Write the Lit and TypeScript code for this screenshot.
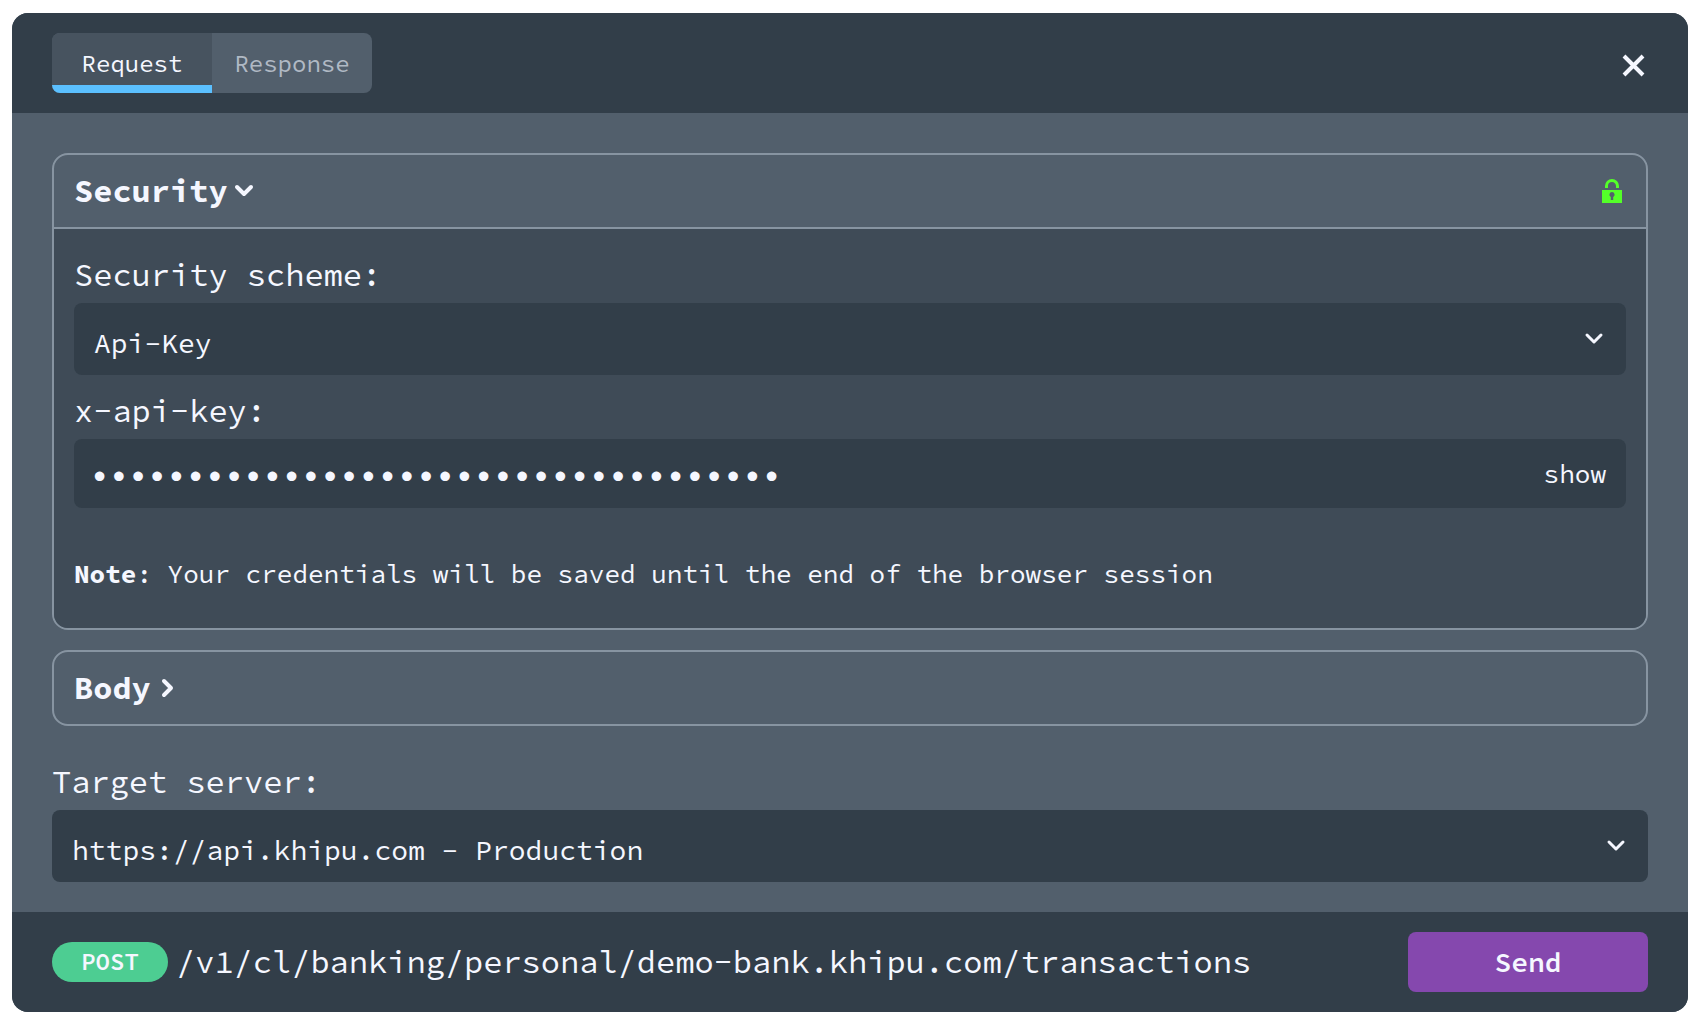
import { LitElement, html, css, svg, nothing } from "lit";
import { customElement, state } from "lit/decorators.js";
import { classMap } from "lit/directives/class-map.js";

const chevron = svg`<path d="M3 6 L10 13 L17 6"/>`;
const chevronRight = svg`<path d="M7 3 L14 10 L7 17"/>`;

@customElement("app-root")
export class AppRoot extends LitElement {
  static styles = css`
    :host {
      --mono: "Source Code Pro", "Noto Sans Mono CJK SC", "Liberation Mono", monospace;
      --text-s: 24px;
      --text-m: 26px;
      --text-l: 28px;
      --text-xl: 32px;
      --dark: #323e49;
      --mid: #525f6c;
      --inset: #3f4b57;
      --line: #8794a1;
      --fg: #f5f7ff;
      display: flex;
      box-sizing: border-box;
      min-height: 100vh;
      padding: 13px 12px 12px;
      background: #fff;
      color: var(--fg);
      font-family: var(--mono);
    }
    *, *::before, *::after { box-sizing: border-box; }
    button, input, select {
      margin: 0;
      border: 0;
      padding: 0;
      background: none;
      color: inherit;
      font: inherit;
    }
    button { cursor: pointer; }
    svg { display: block; flex: none; }
    .dialog {
      display: flex;
      flex: 1;
      flex-direction: column;
      min-width: 0;
      overflow: hidden;
      border-radius: 16px;
      background: var(--mid);
    }
    .bar {
      display: flex;
      align-items: center;
      justify-content: space-between;
      padding: 20px 40px;
      background: var(--dark);
    }
    .tabs {
      display: grid;
      grid-template-columns: 1fr 1fr;
      width: 320px;
      overflow: hidden;
      border-radius: 8px;
      background: var(--mid);
    }
    .tab {
      height: 60px;
      border-bottom: 8px solid transparent;
      padding-top: 10px;
      color: #b0b9c4;
      font-size: var(--text-s);
      line-height: 42px;
    }
    .tab.active {
      border-bottom-color: #5bc0ff;
      background-color: #47535f;
      color: var(--fg);
    }
    .close { padding: 6px 2px 0 4px; }
    .content {
      display: flex;
      flex: 1;
      flex-direction: column;
      gap: 20px;
      padding: 40px 40px 30px;
    }
    .panel {
      overflow: hidden;
      border: 2px solid var(--line);
      border-radius: 16px;
    }
    .summary {
      display: flex;
      align-items: center;
      justify-content: space-between;
      width: 100%;
      height: 72px;
      padding: 0 20px;
      font-size: var(--text-xl);
      font-weight: 700;
      line-height: 44px;
    }
    .title { display: flex; align-items: center; gap: 6px; }
    .chevron {
      fill: none;
      stroke: currentColor;
      stroke-width: 3;
      stroke-linecap: round;
      stroke-linejoin: round;
    }
    .title .chevron { stroke-width: 4; }
    .details {
      border-top: 2px solid var(--line);
      padding: 30px 20px 36px;
      background: var(--inset);
    }
    .field { display: flex; flex-direction: column; }
    .field + .field { margin-top: 20px; }
    .server { margin-top: 20px; }
    .label {
      height: 44px;
      font-size: var(--text-xl);
      line-height: 32px;
    }
    .control {
      display: grid;
      grid-template-columns: 1fr auto;
      align-items: center;
      border-radius: 8px;
      background: var(--dark);
    }
    .select {
      grid-area: 1 / 1 / 2 / 3;
      width: 100%;
      height: 72px;
      border-radius: 8px;
      padding: 8px 60px 0 20px;
      appearance: none;
      font-size: var(--text-l);
    }
    .arrow {
      grid-area: 1 / 2 / 2 / 3;
      margin-right: 22px;
      pointer-events: none;
    }
    .secret {
      width: 100%;
      height: 69px;
      padding: 0 16px;
      font-size: var(--text-xl);
    }
    .show { padding: 0 20px; font-size: var(--text-m); }
    .note {
      margin: 48px 0 0;
      font-size: var(--text-m);
      line-height: 36px;
    }
    .endpoint { display: flex; align-items: center; gap: 8px; min-width: 0; }
    .method {
      flex: none;
      width: 116px;
      border-radius: 20px;
      background: #4dcd92;
      font-size: var(--text-s);
      font-weight: 600;
      line-height: 40px;
      text-align: center;
    }
    .path { font-size: var(--text-xl); line-height: 40px; overflow-wrap: anywhere; }
    .send {
      flex: none;
      width: 240px;
      height: 60px;
      border-radius: 8px;
      background: #8548ae;
      font-size: var(--text-l);
      font-weight: 600;
    }
  `;

  @state() private tab = "Request";
  @state() private securityOpen = true;
  @state() private bodyOpen = false;
  @state() private reveal = false;

  private tabButton(name: string) {
    const active = this.tab === name;
    return html`<button
      class=${classMap({ tab: true, active })}
      role="tab"
      aria-selected=${active ? "true" : "false"}
      @click=${() => (this.tab = name)}
    >${name}</button>`;
  }

  private arrow(open: boolean) {
    return html`<svg class="chevron" width="20" height="20" viewBox="0 0 20 20" aria-hidden="true">${open ? chevron : chevronRight}</svg>`;
  }

  render() {
    return html`
      <main class="dialog">
        <header class="bar">
          <div class="tabs" role="tablist">${this.tabButton("Request")}${this.tabButton("Response")}</div>
          <button class="close" aria-label="Close">
            <svg width="24" height="24" viewBox="0 0 24 24" aria-hidden="true">
              <path d="M2 2 L21 21 M21 2 L2 21" stroke="currentColor" stroke-width="4" />
            </svg>
          </button>
        </header>

        <div class="content">
          <section class="panel">
            <button class="summary" aria-expanded=${this.securityOpen ? "true" : "false"} @click=${() => (this.securityOpen = !this.securityOpen)}>
              <span class="title">Security${this.arrow(this.securityOpen)}</span>
              <svg width="24" height="24" viewBox="0 0 24 24" aria-hidden="true">
                <path d="M4.5 9 V7 a5.5 5.5 0 0 1 11 0 V9" fill="none" stroke="#54ff29" stroke-width="3" />
                <path fill="#54ff29" fill-rule="evenodd" d="M0 11 H20 V24 H0 Z M10 13 a2.6 2.6 0 0 0 -1.2 4.9 V21 h2.4 V17.9 a2.6 2.6 0 0 0 -1.2 -4.9 Z" />
              </svg>
            </button>
            ${this.securityOpen
              ? html`<div class="details">
                  <div class="field">
                    <label class="label" for="scheme">Security scheme:</label>
                    <div class="control">
                      <select class="select" id="scheme"><option>Api-Key</option></select>
                      <span class="arrow">${this.arrow(true)}</span>
                    </div>
                  </div>
                  <div class="field">
                    <label class="label" for="key">x-api-key:</label>
                    <div class="control">
                      <input class="secret" id="key" type=${this.reveal ? "text" : "password"} .value=${"0".repeat(36)} />
                      <button class="show" @click=${() => (this.reveal = !this.reveal)}>${this.reveal ? "hide" : "show"}</button>
                    </div>
                  </div>
                  <p class="note"><b>Note</b>: Your credentials will be saved until the end of the browser session</p>
                </div>`
              : nothing}
          </section>

          <section class="panel">
            <button class="summary" aria-expanded=${this.bodyOpen ? "true" : "false"} @click=${() => (this.bodyOpen = !this.bodyOpen)}>
              <span class="title">Body${this.arrow(this.bodyOpen)}</span>
            </button>
          </section>

          <div class="field server">
            <label class="label" for="server">Target server:</label>
            <div class="control">
              <select class="select" id="server"><option>https://api.khipu.com - Production</option></select>
              <span class="arrow">${this.arrow(true)}</span>
            </div>
          </div>
        </div>

        <footer class="bar">
          <div class="endpoint">
            <span class="method">POST</span>
            <span class="path">/v1/cl/banking/personal/demo-bank.khipu.com/transactions</span>
          </div>
          <button class="send">Send</button>
        </footer>
      </main>
    `;
  }
}
